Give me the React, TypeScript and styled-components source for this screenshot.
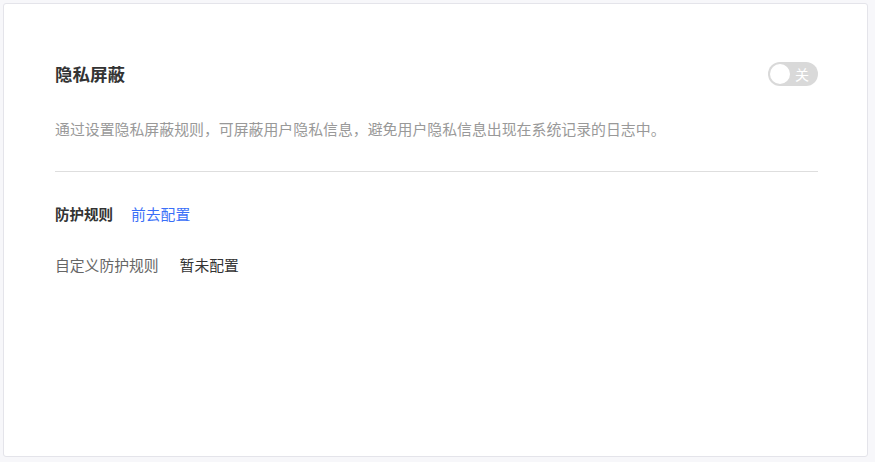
import React, { useState } from "react";
import styled, { createGlobalStyle } from "styled-components";

const Global = createGlobalStyle`
  html, body { margin: 0; padding: 0; background: #f7f7fa; }
  body { font-family: "Noto Sans CJK SC", "Noto Sans", sans-serif; }
  * { box-sizing: border-box; }
`;

const Page = styled.div`
  padding: 3px 0 0 3px;
  width: 875px;
  height: 462px;
`;

const Card = styled.section`
  width: 865px;
  height: 454px;
  background: #fff;
  border: 1px solid #e4e4ea;
  border-radius: 3px;
  padding: 58px 49px 0 51px;
  display: flex;
  flex-direction: column;
`;

const Header = styled.div`
  display: flex;
  align-items: center;
  justify-content: space-between;
  height: 24px;
`;

const Title = styled.h2`
  margin: 0;
  font-size: 17.5px;
  font-weight: 700;
  color: #333;
  line-height: 24px;
`;

const Switch = styled.button<{ $on: boolean }>`
  position: relative;
  width: 50px;
  height: 24px;
  border: none;
  border-radius: 12px;
  padding: 0;
  background: ${(p) => (p.$on ? "#3370ff" : "#d9d9d9")};
  cursor: pointer;
  display: flex;
  align-items: center;
  font-family: inherit;
`;

const Knob = styled.span<{ $on: boolean }>`
  position: absolute;
  top: 2px;
  left: ${(p) => (p.$on ? "28px" : "2px")};
  width: 20px;
  height: 20px;
  border-radius: 50%;
  background: #fff;
`;

const SwitchLabel = styled.span<{ $on: boolean }>`
  position: absolute;
  ${(p) => (p.$on ? "left: 9px;" : "right: 9px;")}
  top: 0;
  line-height: 24px;
  font-size: 14px;
  color: #fff;
`;

const Desc = styled.p`
  margin: 32px 0 0;
  font-size: 14.9px;
  line-height: 22px;
  color: #999;
`;

const Divider = styled.hr`
  margin: 31px 0 0;
  border: none;
  border-top: 1px solid #dedede;
  height: 0;
`;

const Row = styled.div<{ $gap: number; $top: number }>`
  display: flex;
  align-items: center;
  gap: ${(p) => p.$gap}px;
  margin-top: ${(p) => p.$top}px;
  line-height: 22px;
  font-size: 14.8px;
`;

const RowTitle = styled.span`
  font-weight: 700;
  color: #333;
  font-size: 14.5px;
`;

const Link = styled.a`
  color: #3a6ff8;
  text-decoration: none;
  cursor: pointer;
`;

const Label = styled.span`
  color: #666;
`;

const Value = styled.span`
  color: #333;
`;

export default function App() {
  const [on, setOn] = useState(false);
  return (
    <>
      <Global />
      <Page>
        <Card>
          <Header>
            <Title>隐私屏蔽</Title>
            <Switch $on={on} onClick={() => setOn(!on)} aria-pressed={on}>
              <Knob $on={on} />
              <SwitchLabel $on={on}>{on ? "开" : "关"}</SwitchLabel>
            </Switch>
          </Header>
          <Desc>通过设置隐私屏蔽规则，可屏蔽用户隐私信息，避免用户隐私信息出现在系统记录的日志中。</Desc>
          <Divider />
          <Row $gap={18} $top={31}>
            <RowTitle>防护规则</RowTitle>
            <Link>前去配置</Link>
          </Row>
          <Row $gap={21} $top={29}>
            <Label>自定义防护规则</Label>
            <Value>暂未配置</Value>
          </Row>
        </Card>
      </Page>
    </>
  );
}
